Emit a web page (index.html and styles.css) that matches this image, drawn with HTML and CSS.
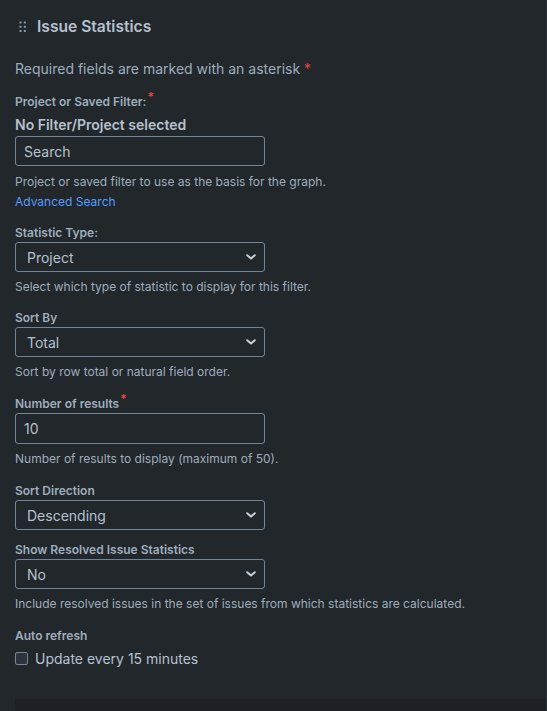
FILE: index.html
```html
<!DOCTYPE html>
<html>
<head>
<meta charset="utf-8">
<link rel="stylesheet" href="styles.css">
</head>
<body>
<div class="panel">
  <div class="header">
    <svg class="handle" width="8" height="12" viewBox="0 0 8 12">
      <rect x="0.5" y="0.5" width="2" height="2" fill="#8c9bab"/>
      <rect x="4.8" y="0.5" width="2" height="2" fill="#8c9bab"/>
      <rect x="0.5" y="4.8" width="2" height="2" fill="#8c9bab"/>
      <rect x="4.8" y="4.8" width="2" height="2" fill="#8c9bab"/>
      <rect x="0.5" y="9" width="2" height="2" fill="#8c9bab"/>
      <rect x="4.8" y="9" width="2" height="2" fill="#8c9bab"/>
    </svg>
    <h1 class="title">Issue Statistics</h1>
  </div>

  <p class="required-note">Required fields are marked with an asterisk <span class="req">*</span></p>

  <div class="group first">
    <div class="label">Project or Saved Filter:<sup class="req small">*</sup></div>
    <div class="selected">No Filter/Project selected</div>
    <input class="text-input search" type="text" value="Search">
    <div class="help help-first">Project or saved filter to use as the basis for the graph.</div>
    <a class="link" href="#">Advanced Search</a>
  </div>

  <div class="group">
    <div class="label">Statistic Type:</div>
    <div class="select-wrap">
      <select class="select"><option>Project</option></select>
      <svg class="chev" width="10" height="6" viewBox="0 0 10 6"><path d="M1.2 1.2 L5 4.6 L8.8 1.2" fill="none" stroke="#c7d1db" stroke-width="2" stroke-linecap="round" stroke-linejoin="round"/></svg>
    </div>
    <div class="help">Select which type of statistic to display for this filter.</div>
  </div>

  <div class="group">
    <div class="label">Sort By</div>
    <div class="select-wrap">
      <select class="select"><option>Total</option></select>
      <svg class="chev" width="10" height="6" viewBox="0 0 10 6"><path d="M1.2 1.2 L5 4.6 L8.8 1.2" fill="none" stroke="#c7d1db" stroke-width="2" stroke-linecap="round" stroke-linejoin="round"/></svg>
    </div>
    <div class="help">Sort by row total or natural field order.</div>
  </div>

  <div class="group num-group">
    <div class="label">Number of results<sup class="req small">*</sup></div>
    <input class="text-input num" type="text" value="10">
    <div class="help">Number of results to display (maximum of 50).</div>
  </div>

  <div class="group dir-group">
    <div class="label">Sort Direction</div>
    <div class="select-wrap">
      <select class="select"><option>Descending</option></select>
      <svg class="chev" width="10" height="6" viewBox="0 0 10 6"><path d="M1.2 1.2 L5 4.6 L8.8 1.2" fill="none" stroke="#c7d1db" stroke-width="2" stroke-linecap="round" stroke-linejoin="round"/></svg>
    </div>
  </div>

  <div class="group after-select">
    <div class="label">Show Resolved Issue Statistics</div>
    <div class="select-wrap">
      <select class="select"><option>No</option></select>
      <svg class="chev" width="10" height="6" viewBox="0 0 10 6"><path d="M1.2 1.2 L5 4.6 L8.8 1.2" fill="none" stroke="#c7d1db" stroke-width="2" stroke-linecap="round" stroke-linejoin="round"/></svg>
    </div>
    <div class="help">Include resolved issues in the set of issues from which statistics are calculated.</div>
  </div>

  <div class="group auto-group">
    <div class="label">Auto refresh</div>
    <label class="check-row"><span class="checkbox"></span><span>Update every 15 minutes</span></label>
  </div>

  <div class="footer-band"></div>
</div>
</body>
</html>
```

FILE: styles.css
```css
html, body {
  margin: 0;
  padding: 0;
  background: #22272b;
}
body {
  font-family: Inter, "Liberation Sans", Arial, sans-serif;
  color: #b6c2cf;
  height: 711px;
  overflow: hidden;
}
.panel {
  padding: 0 0 0 15px;
  border-right: 1px solid #2a3036;
  min-height: 711px;
  box-sizing: border-box;
}
.header {
  display: flex;
  align-items: center;
  padding-top: 16px;
  height: 22px;
}
.handle {
  margin-left: 4px;
  margin-right: 10px;
}
.title {
  margin: 0;
  font-size: 15.6px;
  font-weight: 600;
  line-height: 22px;
  color: #b6c2cf;
}
.required-note {
  margin: 21px 0 0;
  font-size: 14px;
  line-height: 20px;
  color: #9fadbc;
}
.req {
  color: #e2483d;
}
.req.small {
  font-size: 12px;
  line-height: 0;
  vertical-align: 0;
  position: relative;
  top: -5px;
  margin-left: 1px;
}
.group {
  margin-top: 15px;
}
.group.first {
  margin-top: 15px;
}
.group.num-group {
  margin-top: 16px;
}
.group.dir-group {
  margin-top: 16px;
}
.group.after-select {
  margin-top: 12px;
}
.group.auto-group {
  margin-top: 16px;
}
.label {
  font-size: 12px;
  font-weight: 600;
  line-height: 16px;
  color: #9fadbc;
}
.selected {
  margin-top: 5px;
  font-size: 14px;
  font-weight: 600;
  line-height: 20px;
  color: #b6c2cf;
}
.text-input {
  display: block;
  box-sizing: border-box;
  width: 250px;
  height: 30px;
  margin: 1px 0 0;
  padding: 0 8px;
  border: 1px solid #738496;
  border-radius: 3px;
  background: #22272b;
  color: #b6c2cf;
  font-family: Inter, "Liberation Sans", Arial, sans-serif;
  font-size: 14px;
  outline: none;
}
.text-input.num {
  height: 31px;
}
.select-wrap {
  position: relative;
  width: 250px;
  margin-top: 1px;
}
.select {
  display: block;
  box-sizing: border-box;
  width: 250px;
  height: 30px;
  margin: 0;
  padding: 0 0 0 11px;
  border: 1px solid #738496;
  border-radius: 3px;
  background: #22272b;
  color: #b6c2cf;
  font-family: Inter, "Liberation Sans", Arial, sans-serif;
  font-size: 14px;
  appearance: none;
  -webkit-appearance: none;
  outline: none;
}
.chev {
  position: absolute;
  right: 9px;
  top: 12px;
  pointer-events: none;
}
.help {
  margin-top: 7px;
  font-size: 12px;
  line-height: 16px;
  color: #9fadbc;
}
.help.help-first {
  margin-top: 8px;
}
.link {
  display: block;
  margin-top: 4px;
  font-size: 12px;
  line-height: 16px;
  color: #579dff;
  text-decoration: none;
}
.check-row {
  display: flex;
  align-items: center;
  margin-top: 4px;
  height: 20px;
  font-size: 14px;
  color: #b6c2cf;
}
.checkbox {
  box-sizing: border-box;
  width: 13px;
  height: 13px;
  border: 1px solid #738496;
  border-radius: 2px;
  background: #2c333a;
  margin-right: 7px;
}
.footer-band {
  margin-top: 31px;
  height: 20px;
  background: #1d2125;
}
```
